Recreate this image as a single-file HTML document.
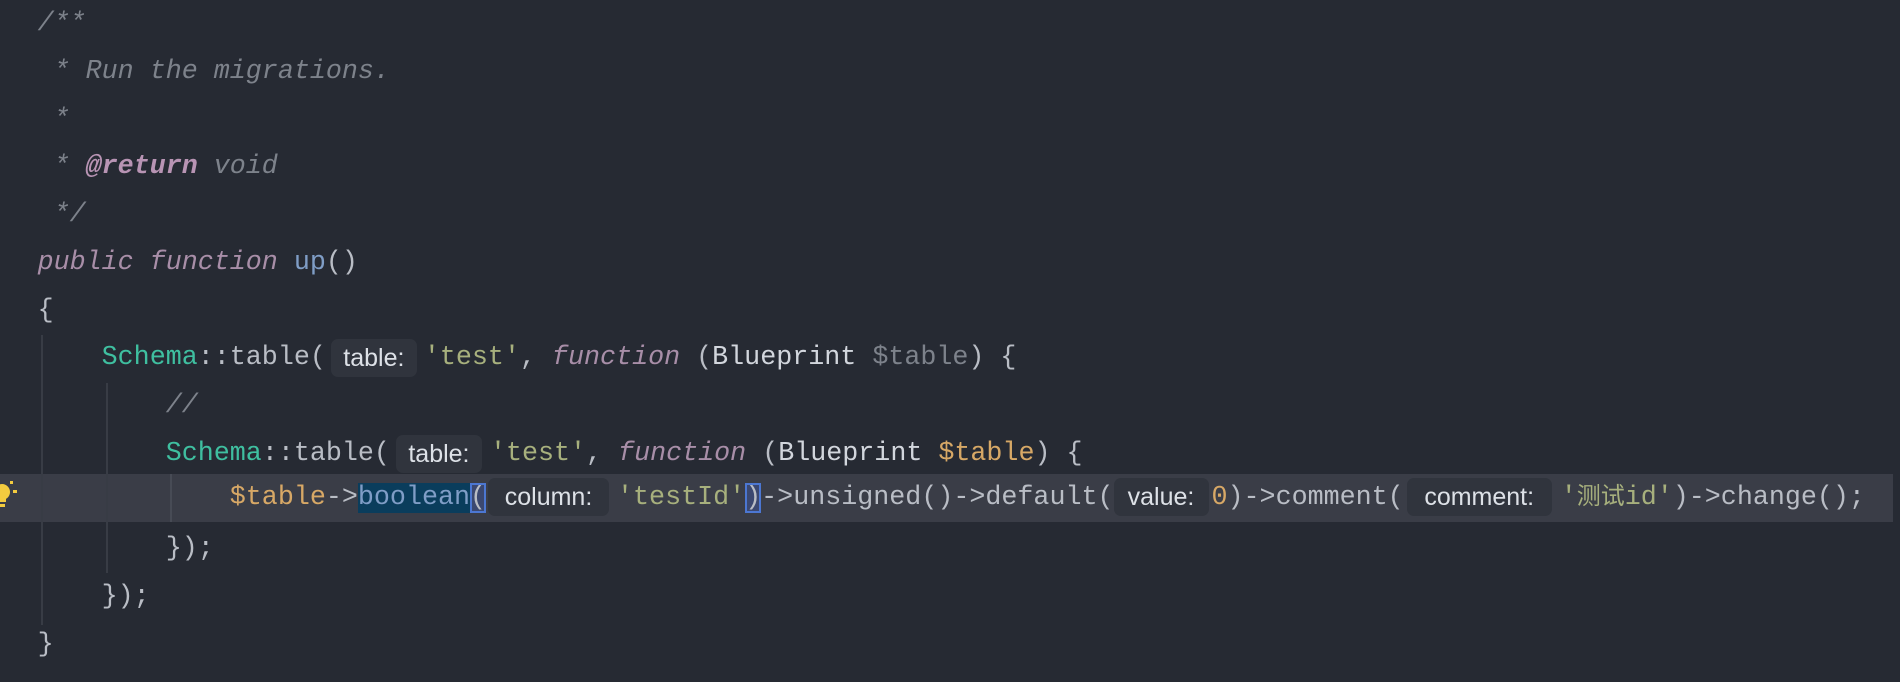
<!DOCTYPE html>
<html><head><meta charset="utf-8"><style>
html,body{margin:0;padding:0;background:#262a33;width:1900px;height:682px;overflow:hidden}
.ed{position:relative;width:1900px;height:682px;font-family:"Liberation Mono","Noto Sans CJK SC",monospace;font-size:26.7px;color:#b9bdc5}
.l{position:absolute;left:37.6px;height:47.75px;line-height:47.75px;white-space:pre}
.cur{position:absolute;left:0;width:1893px;top:474px;height:48px;background:#3a3d47}
.g{position:absolute;width:2px;background:#383c45}
.c{color:#7d828b;font-style:italic}
.tag{color:#b894b4;font-weight:bold;font-style:italic}
.kw{color:#a88ea8;font-style:italic}
.fn{color:#7f9dc6}
.cls{color:#3fbfa0}
.s{color:#a7b07d}
.w{color:#d2d6dd}
.uv{color:#7d828b}
.v{color:#d7a866}
.n{color:#d7a866}
.h{display:inline-block;position:relative;height:47.75px;vertical-align:top}
.h span{position:absolute;top:4px;height:38px;line-height:38px;background:#30343d;border-radius:7px;font-family:"Liberation Sans","DejaVu Sans",sans-serif;font-size:25px;color:#dde1e7;padding:0;box-sizing:border-box;text-align:center}
.sel{background:#0a3d5c}
.bp{outline:2px solid #4c77d2;outline-offset:-2px;background:#3b4870}
.cj{display:inline-block;width:24px;font-family:"Noto Sans CJK SC",sans-serif;font-size:24px;text-align:center;line-height:20px}
</style></head><body><div class="ed">
<div class="cur"></div>
<div class="g" style="left:41px;top:335px;height:290px"></div>
<div class="g" style="left:106px;top:383px;height:190px"></div>
<div class="g" style="left:170px;top:474px;height:48px;background:#474b55"></div>
<svg style="position:absolute;left:0;top:478px" width="22" height="34" viewBox="0 0 22 34"><circle cx="2" cy="14" r="8" fill="#f3cb3f"/><rect x="0" y="18" width="6" height="6" fill="#f3cb3f"/><rect x="0" y="26" width="5" height="3" fill="#f3cb3f"/><rect x="10" y="3" width="3" height="3" fill="#f3cb3f"/><rect x="13" y="12" width="4" height="3" fill="#f3cb3f"/></svg>
<div class="l c" style="top:1px">/**</div>
<div class="l c" style="top:48.75px"> * Run the migrations.</div>
<div class="l c" style="top:96.5px"> *</div>
<div class="l c" style="top:144.25px"> * <span class="tag">@return</span> void</div>
<div class="l c" style="top:192px"> */</div>
<div class="l" style="top:239.75px"><span class="kw">public function</span> <span class="fn">up</span>()</div>
<div class="l" style="top:287.5px">{</div>
<div class="l" style="top:335.25px">    <span class="cls">Schema</span>::table(<span class="h" style="width:98px"><span style="left:5px;width:86px">table:</span></span><span class="s">'test'</span>, <span class="kw">function</span> (<span class="w">Blueprint</span> <span class="uv">$table</span>) {</div>
<div class="l c" style="top:383px">        //</div>
<div class="l" style="top:430.75px">        <span class="cls">Schema</span>::table(<span class="h" style="width:100px"><span style="left:6px;width:86px">table:</span></span><span class="s">'test'</span>, <span class="kw">function</span> (<span class="w">Blueprint</span> <span class="v">$table</span>) {</div>
<div class="l" style="top:474px;height:48px;line-height:48px">            <span class="v">$table</span>-&gt;<span class="sel fn">boolean</span><span class="bp">(</span><span class="h" style="width:131px;height:48px"><span style="left:2px;width:121px">column:</span></span><span class="s">'testId'</span><span class="bp">)</span>-&gt;unsigned()-&gt;default(<span class="h" style="width:98px;height:48px"><span style="left:0;width:95px">value:</span></span><span class="n">0</span>)-&gt;comment(<span class="h" style="width:157px;height:48px"><span style="left:3px;width:145px">comment:</span></span><span class="s">'<span class="cj">测</span><span class="cj">试</span>id'</span>)-&gt;change();</div>
<div class="l" style="top:526.25px">        });</div>
<div class="l" style="top:574px">    });</div>
<div class="l" style="top:621.75px">}</div>
</div></body></html>
